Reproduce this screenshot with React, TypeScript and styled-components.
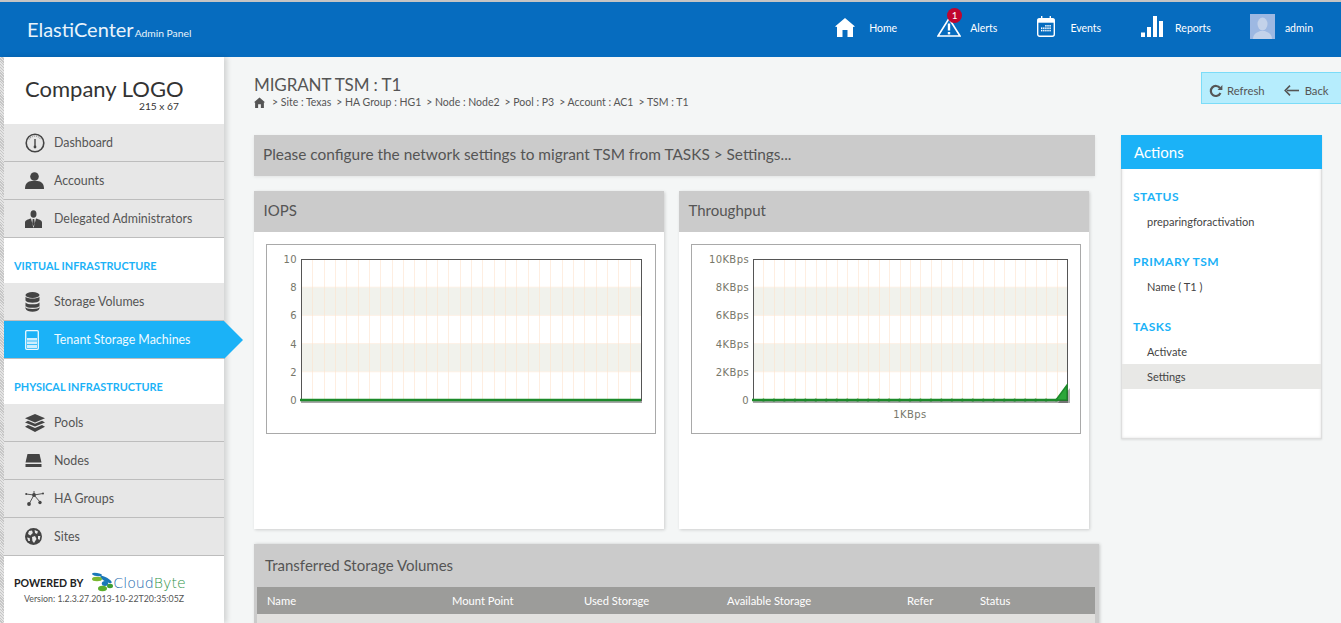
import React from 'react'
import styled, { createGlobalStyle } from 'styled-components'

const Global = createGlobalStyle`
  html, body {
    margin: 0;
    height: 623px;
    overflow: hidden;
    background: #f4f6f6;
    font-family: Lato, "Noto Sans", "Liberation Sans", sans-serif;
  }
  * { box-sizing: border-box; }
`

const BLUE = '#1bb2f7'

const Page = styled.div`
  width: 1341px;
  height: 623px;
  display: flex;
  flex-direction: column;
  overflow: hidden;
`

const TopBar = styled.header`
  height: 57px;
  flex: none;
  background: #066cbf;
  border-top: 2px solid #c4c4c4;
  display: flex;
  align-items: center;
  justify-content: space-between;
  padding: 0 28px 0 27px;
  color: #fff;
`

const Brand = styled.div`
  font-size: 20px;
  display: flex;
  align-items: baseline;
  gap: 1px;
  padding-bottom: 2px;
  color: #e8f3fb;
  small {
    font-size: 10.3px;
  }
`

const Nav = styled.nav`
  display: flex;
  align-items: center;
  gap: 40px;
  margin-bottom: 6px;
`

const NavItem = styled.div<{ $gap: number }>`
  position: relative;
  display: flex;
  align-items: center;
  gap: ${p => p.$gap}px;
  font-size: 10.5px;
`

const NavLabel = styled.span`
  padding-top: 3px;
`

const Badge = styled.span`
  position: absolute;
  left: 10px;
  top: -9px;
  width: 15px;
  height: 15px;
  border-radius: 50%;
  background: #c0052e;
  font-size: 10px;
  line-height: 15px;
  text-align: center;
`

const Avatar = styled.div`
  width: 25px;
  height: 25px;
  margin-left: -1px;
  background: #9db8e2;
  overflow: hidden;
`

const Body = styled.div`
  flex: 1;
  display: flex;
  min-height: 0;
`

const Sidebar = styled.aside`
  width: 224px;
  flex: none;
  background: #fff;
  border-left: 4px solid #d2d2d2;
  border-image: repeating-linear-gradient(45deg, #c6c6c6 0 1px, #e4e4e4 1px 2px) 4;
  box-shadow: 3px 0 5px rgba(0, 0, 0, 0.14);
  position: relative;
  z-index: 2;
`

const LogoBox = styled.div`
  height: 67px;
  padding: 18px 0 0 21px;
  color: #333;
  font-size: 22px;
  line-height: 27px;
  position: relative;
  small {
    position: absolute;
    left: 135px;
    top: 43px;
    font-size: 10.2px;
    line-height: 13px;
  }
`

const MenuItem = styled.div<{ $active?: boolean }>`
  height: 38px;
  display: flex;
  align-items: center;
  position: relative;
  padding-left: 21px;
  font-size: 12.4px;
  color: ${p => (p.$active ? '#eefaff' : '#555')};
  background: ${p => (p.$active ? BLUE : '#e7e7e7')};
  border-bottom: 1px solid #bdbdbd;
  ${p =>
    p.$active &&
    `&::after {
      content: '';
      position: absolute;
      left: 100%;
      top: 0;
      border-style: solid;
      border-width: 19px 0 19px 19px;
      border-color: transparent transparent transparent ${BLUE};
    }`}
`

const IconSlot = styled.span`
  width: 29px;
  display: flex;
  align-items: center;
  flex: none;
`

const SectionLabel = styled.div`
  height: 45px;
  padding: 21px 0 0 10px;
  font-size: 10.9px;
  line-height: 14px;
  font-weight: 700;
  color: ${BLUE};
`

const Powered = styled.div`
  padding: 17px 0 0 10px;
  color: #222;
  font-size: 10.6px;
  font-weight: 700;
`

const PoweredRow = styled.div`
  display: flex;
  align-items: center;
  gap: 8px;
  height: 20px;
`

const Version = styled.div`
  font-size: 8.8px;
  font-weight: 400;
  color: #555;
  padding-left: 10px;
  white-space: nowrap;
`

const Logotype = styled.span`
  display: flex;
  align-items: center;
  font-family: "DejaVu Sans", sans-serif;
  font-size: 14.2px;
  font-weight: 200;
  margin-top: -1px;
  color: #1769ad;
  b {
    font-weight: 200;
    color: #2f9447;
  }
`

const Main = styled.main`
  flex: 1;
  padding: 16px 0 0 30px;
  min-width: 0;
`

const TitleRow = styled.div`
  height: 62px;
  display: flex;
  justify-content: space-between;
`

const Title = styled.h1`
  margin: 0;
  font-size: 17px;
  line-height: 23px;
  font-weight: 400;
  letter-spacing: -0.1px;
  color: #555;
`

const Crumbs = styled.div`
  display: flex;
  align-items: center;
  gap: 5px;
  font-size: 10.5px;
  line-height: 13px;
  color: #555;
  svg {
    margin-right: 2px;
  }
`

const RefreshBar = styled.div`
  width: 140px;
  height: 32px;
  margin-top: -1px;
  display: flex;
  align-items: center;
  gap: 19px;
  padding: 5px 0 0 7px;
  background: #b6edfd;
  border: 1px solid #7bdcf8;
  border-right: none;
  font-size: 11.3px;
  color: #555;
`

const BarButton = styled.span<{ $gap: number }>`
  display: flex;
  align-items: center;
  gap: ${p => p.$gap}px;
`

const Columns = styled.div`
  display: flex;
  align-items: flex-start;
`

const LeftColumn = styled.div`
  width: 867px;
  flex: none;
`

const Notice = styled.div`
  width: 841px;
  height: 41px;
  background: #cbcbcb;
  color: #555;
  font-size: 15.4px;
  line-height: 39px;
  padding-left: 9px;
  box-shadow: 0 1px 3px rgba(0, 0, 0, 0.08);
`

const ChartRow = styled.div`
  display: flex;
  gap: 15px;
  margin-top: 15px;
`

const Card = styled.section`
  width: 410px;
  height: 338px;
  background: #fff;
  box-shadow: 1px 1px 3px rgba(0, 0, 0, 0.16);
`

const CardHead = styled.div`
  height: 41px;
  background: #cbcbcb;
  color: #555;
  font-size: 15px;
  line-height: 39px;
  padding-left: 9.5px;
`

const ChartFrame = styled.div`
  width: 390px;
  height: 190px;
  margin: 12px 0 0 12px;
  border: 1px solid #a9a9a9;
  svg {
    display: block;
  }
`

const TablePanel = styled.section`
  width: 845px;
  margin-top: 15px;
  padding: 0 4px 0 3px;
  background: #cbcbcb;
  box-shadow: 1px 0 3px rgba(0, 0, 0, 0.18);
`

const TableTitle = styled.div`
  height: 43px;
  line-height: 43px;
  padding-left: 8px;
  font-size: 15px;
  color: #555;
`

const TableHead = styled.div`
  height: 27px;
  display: grid;
  grid-template-columns: 185px 132px 143px 180px 73px 1fr;
  align-items: center;
  padding-left: 10px;
  background: #9c9c9a;
  color: #fff;
  font-size: 11.2px;
`

const TableRow = styled.div`
  height: 30px;
  background: #e2e1df;
`

const ActionsPanel = styled.aside`
  width: 201px;
  height: 304px;
  background: #fff;
  border: 1px solid #dedede;
  border-top: none;
  box-shadow: inset 0 0 3px rgba(0, 0, 0, 0.12), 0 1px 2px rgba(0, 0, 0, 0.1);
`

const ActionsHead = styled.div`
  height: 34px;
  margin: 0 -1px;
  background: ${BLUE};
  color: #fff;
  font-size: 15px;
  line-height: 34px;
  padding-left: 13px;
`

const ActionGroup = styled.div`
  padding-top: 21px;
`

const ActionLabel = styled.div`
  height: 14px;
  line-height: 14px;
  padding-left: 11px;
  font-size: 12px;
  font-weight: 700;
  letter-spacing: 0.5px;
  color: ${BLUE};
`

const ActionLink = styled.div<{ $on?: boolean }>`
  height: 25px;
  line-height: 25px;
  padding-left: 25px;
  font-size: 11px;
  color: #444;
  background: ${p => (p.$on ? '#e8e8e6' : 'transparent')};
`

const LinkStack = styled.div`
  padding-top: 5px;
`

const HomeIcon = ({ size = 20, color = '#fff' }: { size?: number; color?: string }) => (
  <svg width={size} height={size} viewBox="0 0 20 20">
    <path fill={color} d="M10 1 L20 9.5 L18 10 V20 H12.5 V13 H7.5 V20 H2 V10 L0 9.5 Z" />
  </svg>
)

const AlertIcon = () => (
  <svg width="24" height="20" viewBox="0 0 24 20">
    <path d="M12 1.5 L23 19 H1 Z" fill="none" stroke="#fff" strokeWidth="1.6" />
    <rect x="10.8" y="6.5" width="2.4" height="7" fill="#fff" />
    <rect x="10.8" y="15" width="2.4" height="2.4" fill="#fff" />
  </svg>
)

const CalendarIcon = () => (
  <svg width="18" height="21" viewBox="0 0 18 21">
    <rect x="0.7" y="2.7" width="16.6" height="17.6" rx="2" fill="none" stroke="#fff" strokeWidth="1.4" />
    <rect x="0.7" y="2.7" width="16.6" height="4" fill="#fff" />
    <rect x="4" y="0" width="1.4" height="4" fill="#fff" />
    <rect x="12.6" y="0" width="1.4" height="4" fill="#fff" />
    <g fill="#fff">
      {[0, 1, 2].map(r =>
        [0, 1, 2, 3, 4].map(c =>
          r === 0 && c < 2 ? null : <rect key={`${r}${c}`} x={4 + c * 2.1} y={9 + r * 2.4} width="1.4" height="1.6" />
        )
      )}
    </g>
  </svg>
)

const BarsIcon = () => (
  <svg width="22" height="21" viewBox="0 0 22 21">
    <rect x="0" y="16.5" width="4" height="4.5" fill="#fff" />
    <rect x="6" y="11" width="4" height="10" fill="#fff" />
    <rect x="12" y="0" width="4" height="21" fill="#fff" />
    <rect x="18" y="5" width="4" height="16" fill="#fff" />
  </svg>
)

const GaugeIcon = () => (
  <svg width="20" height="20" viewBox="0 0 20 20">
    <circle cx="10" cy="10" r="8.8" fill="none" stroke="#444" strokeWidth="1.6" />
    <path d="M4 6.5 A7 7 0 0 1 16 6.5" fill="none" stroke="#999" strokeWidth="1.2" strokeDasharray="1 1" />
    <path d="M10 6 V13" stroke="#444" strokeWidth="1.4" />
    <circle cx="10" cy="14" r="1.4" fill="#444" />
  </svg>
)

const PersonIcon = () => (
  <svg width="19" height="17" viewBox="0 0 19 17">
    <circle cx="9.5" cy="4.5" r="4.3" fill="#444" />
    <path fill="#444" d="M0 17 C0 11 3 9.5 6.5 9 H12.5 C16 9.5 19 11 19 17 Z" />
  </svg>
)

const SuitIcon = () => (
  <svg width="17" height="18" viewBox="0 0 17 18">
    <ellipse cx="8.5" cy="4" rx="3" ry="3.8" fill="#444" />
    <path fill="#444" d="M0 18 V12.5 C0 10 3 9.5 6 8.5 L8.5 18 L11 8.5 C14 9.5 17 10 17 12.5 V18 Z" />
    <path fill="#444" d="M7.7 9 H9.3 L9.8 14 L8.5 16 L7.2 14 Z" />
  </svg>
)

const DatabaseIcon = () => (
  <svg width="15" height="20" viewBox="0 0 15 20">
    <ellipse cx="7.5" cy="3" rx="7" ry="3" fill="#444" />
    <path fill="#444" d="M.5 4.8 C2 7.2 13 7.2 14.5 4.8 V8.5 C13 11.4 2 11.4 .5 8.5 Z" />
    <path fill="#444" d="M.5 10.4 C2 13 13 13 14.5 10.4 V16.5 C13 20.8 2 20.8 .5 16.5 Z" />
    <path d="M.5 14.4 C2 17 13 17 14.5 14.4" fill="none" stroke="#e7e7e7" strokeWidth="1.1" />
  </svg>
)

const MachineIcon = () => (
  <svg width="15" height="20" viewBox="0 0 15 20">
    <rect x="0.7" y="0.7" width="12.6" height="18.6" rx="1" fill="none" stroke="#eaf8ff" strokeWidth="1.3" />
    <rect x="2" y="8" width="10" height="2.6" fill="#cfeefd" />
    <rect x="2" y="11.4" width="10" height="2.6" fill="#cfeefd" />
    <rect x="2" y="14.8" width="10" height="3.2" fill="#cfeefd" />
  </svg>
)

const LayersIcon = () => (
  <svg width="20" height="18" viewBox="0 0 20 18">
    <path fill="#444" d="M10 0 L20 4.2 L10 8.4 L0 4.2 Z" />
    <path fill="#444" d="M3 6.8 L10 9.8 L17 6.8 L20 8.4 L10 12.6 L0 8.4 Z" />
    <path fill="#444" d="M3 11 L10 14 L17 11 L20 12.8 L10 18 L0 12.8 Z" />
  </svg>
)

const DriveIcon = () => (
  <svg width="17" height="13" viewBox="0 0 17 13">
    <path fill="#444" d="M2.5 0 H14.5 L16.5 8.5 H0.5 Z" />
    <rect x="0.5" y="10" width="16" height="3" fill="#444" />
  </svg>
)

const MeshIcon = () => (
  <svg width="19" height="15" viewBox="0 0 19 15">
    <g stroke="#555" strokeWidth="1">
      <path d="M9 4 L4 13 M9 4 L15 11 M9 4 L1 3 M9 4 L18 2.5 M9 4 V0" />
    </g>
    <g fill="#444">
      <circle cx="9" cy="4" r="1.9" />
      <circle cx="4" cy="13" r="1.9" />
      <circle cx="15" cy="11.5" r="1.7" />
      <circle cx="1.2" cy="3" r="1" />
      <circle cx="18" cy="2.5" r="1" />
    </g>
  </svg>
)

const GlobeIcon = () => (
  <svg width="17" height="17" viewBox="0 0 17 17">
    <circle cx="8.5" cy="8.5" r="8.5" fill="#444" />
    <g fill="#e7e7e7">
      <path d="M4 3 L7 2.4 L7.8 5 L5.4 7.6 L3 6 Z" />
      <path d="M9.6 2 L13 3.5 L12 6 L10 5 Z" />
      <path d="M7 9 L10 8 L11.5 11 L9 15 L7.4 13 Z" />
      <path d="M13 8 L15.4 8 L14.6 12 L13 11 Z" />
      <path d="M2 9.4 L4.6 10 L5 13 L3.4 13 Z" />
    </g>
  </svg>
)

const RefreshIcon = () => (
  <svg width="14" height="14" viewBox="0 0 14 14">
    <path d="M11.4 9 A5 5 0 1 1 11 4.2" fill="none" stroke="#555" strokeWidth="2.2" />
    <path d="M13.4 1 V6 H8.6 Z" fill="#555" />
  </svg>
)

const BackIcon = () => (
  <svg width="15" height="11" viewBox="0 0 15 11">
    <path d="M15 5.5 H3" stroke="#555" strokeWidth="1.6" />
    <path d="M6 .6 L1.2 5.5 L6 10.4" fill="none" stroke="#555" strokeWidth="1.6" />
  </svg>
)

const CloudByteMark = () => (
  <svg width="22" height="21" viewBox="0 0 22 21">
    <ellipse cx="6" cy="2.5" rx="5" ry="1.6" fill="#1a78b8" transform="rotate(8 6 2.5)" />
    <ellipse cx="15" cy="7.5" rx="6.5" ry="2" fill="#1a78b8" transform="rotate(30 15 7.5)" />
    <ellipse cx="6" cy="7" rx="5" ry="2.2" fill="#7cb82f" />
    <ellipse cx="14" cy="11.5" rx="3.2" ry="2.5" fill="#1a78b8" />
    <ellipse cx="19" cy="14" rx="3" ry="2.2" fill="#3f9e36" />
    <ellipse cx="11.5" cy="16.5" rx="4.5" ry="2.7" fill="#5cae2e" />
  </svg>
)

const PLOT_TOP = 14
const PLOT_BOTTOM = 155

type ChartProps = {
  left: number
  right: number
  ticks: string[]
  xLabel?: string
  spike?: boolean
}

// flot style chart, drawn by hand
const Chart = ({ left, right, ticks, xLabel, spike }: ChartProps) => {
  const step = (right - left) / 30
  const rowH = (PLOT_BOTTOM - PLOT_TOP) / 5
  const yAt = (i: number) => PLOT_BOTTOM - i * rowH
  const labelProps = {
    fontFamily: "'DejaVu Sans', sans-serif",
    fontSize: 10,
    letterSpacing: 0.4,
    fill: '#77776a',
  }
  return (
    <svg width="388" height="188" viewBox="0 0 388 188">
      {[1, 3].map(i => (
        <rect key={i} x={left} y={yAt(i + 1)} width={right - left} height={rowH} fill="#f1f2ec" />
      ))}
      {[1, 2, 3, 4].map(i => (
        <line key={i} x1={left} x2={right} y1={yAt(i)} y2={yAt(i)} stroke="#fdf1e6" strokeWidth="1" />
      ))}
      {Array.from({ length: 29 }, (_, i) => (
        <line
          key={i}
          x1={Math.round(left + (i + 1) * step) + 0.5}
          x2={Math.round(left + (i + 1) * step) + 0.5}
          y1={PLOT_TOP}
          y2={PLOT_BOTTOM}
          stroke="#fde3cd"
          strokeOpacity="0.6"
          strokeWidth="1"
        />
      ))}
      <rect x={left + 0.5} y={PLOT_TOP + 0.5} width={right - left} height={PLOT_BOTTOM - PLOT_TOP} fill="none" stroke="#555" strokeWidth="1" />
      {ticks.map((t, i) => (
        <text key={t} x={left - 4} y={yAt(i) + 4} textAnchor="end" {...labelProps}>
          {t}
        </text>
      ))}
      {xLabel && (
        <text x={(left + right) / 2} y={173} textAnchor="middle" {...labelProps}>
          {xLabel}
        </text>
      )}
      <line x1={left} x2={right + 1} y1={PLOT_BOTTOM + 2} y2={PLOT_BOTTOM + 2} stroke="#000" strokeOpacity="0.35" strokeWidth="2" />
      {spike ? (
        <>
          <path d={`M${right - 10} ${PLOT_BOTTOM + 2} L${right + 2} ${PLOT_BOTTOM - 13} V${PLOT_BOTTOM + 2} Z`} fill="#000" fillOpacity="0.3" transform="translate(1 1)" />
          <path d={`M${right - 11} ${PLOT_BOTTOM} L${right} ${PLOT_BOTTOM - 15} V${PLOT_BOTTOM} Z`} fill="#2ca73a" stroke="#1c8a2a" strokeWidth="1.5" />
          <line x1={left - 1} x2={right - 11} y1={PLOT_BOTTOM} y2={PLOT_BOTTOM} stroke="#1c8a2a" strokeWidth="2.5" />
          {Array.from({ length: 29 }, (_, i) => (
            <circle key={i} cx={left + (i + 1) * step} cy={PLOT_BOTTOM} r="1.5" fill="#1c8a2a" />
          ))}
        </>
      ) : (
        <line x1={left - 1} x2={right} y1={PLOT_BOTTOM} y2={PLOT_BOTTOM} stroke="#1c8a2a" strokeWidth="2.5" />
      )}
    </svg>
  )
}

const menuTop = [
  { label: 'Dashboard', icon: <GaugeIcon /> },
  { label: 'Accounts', icon: <PersonIcon /> },
  { label: 'Delegated Administrators', icon: <SuitIcon /> },
]

const menuPhysical = [
  { label: 'Pools', icon: <LayersIcon /> },
  { label: 'Nodes', icon: <DriveIcon /> },
  { label: 'HA Groups', icon: <MeshIcon /> },
  { label: 'Sites', icon: <GlobeIcon /> },
]

const crumbs = ['Site : Texas', 'HA Group : HG1', 'Node : Node2', 'Pool : P3', 'Account : AC1', 'TSM : T1']

const App = () => (
  <Page>
    <Global />
    <TopBar>
      <Brand>
        ElastiCenter<small>Admin Panel</small>
      </Brand>
      <Nav>
        <NavItem $gap={14}>
          <HomeIcon />
          <NavLabel>Home</NavLabel>
        </NavItem>
        <NavItem $gap={9}>
          <AlertIcon />
          <Badge>1</Badge>
          <NavLabel>Alerts</NavLabel>
        </NavItem>
        <NavItem $gap={15}>
          <CalendarIcon />
          <NavLabel>Events</NavLabel>
        </NavItem>
        <NavItem $gap={12}>
          <BarsIcon />
          <NavLabel>Reports</NavLabel>
        </NavItem>
        <NavItem $gap={10}>
          <Avatar>
            <svg width="25" height="25" viewBox="0 0 25 25">
              <ellipse cx="12.5" cy="10" rx="5" ry="6.5" fill="#c3d2ea" />
              <path d="M3 25 C3 19 8 18.5 10 17 H15 C17 18.5 22 19 22 25 Z" fill="#c3d2ea" />
            </svg>
          </Avatar>
          <NavLabel>admin</NavLabel>
        </NavItem>
      </Nav>
    </TopBar>
    <Body>
      <Sidebar>
        <LogoBox>
          Company LOGO
          <small>215 x 67</small>
        </LogoBox>
        {menuTop.map(m => (
          <MenuItem key={m.label}>
            <IconSlot>{m.icon}</IconSlot>
            {m.label}
          </MenuItem>
        ))}
        <SectionLabel>VIRTUAL INFRASTRUCTURE</SectionLabel>
        <MenuItem>
          <IconSlot>
            <DatabaseIcon />
          </IconSlot>
          Storage Volumes
        </MenuItem>
        <MenuItem $active>
          <IconSlot>
            <MachineIcon />
          </IconSlot>
          Tenant Storage Machines
        </MenuItem>
        <SectionLabel>PHYSICAL INFRASTRUCTURE</SectionLabel>
        {menuPhysical.map(m => (
          <MenuItem key={m.label}>
            <IconSlot>{m.icon}</IconSlot>
            {m.label}
          </MenuItem>
        ))}
        <Powered>
          <PoweredRow>
            POWERED BY
            <Logotype>
              <CloudByteMark />
              Cloud<b>Byte</b>
            </Logotype>
          </PoweredRow>
          <Version>Version: 1.2.3.27.2013-10-22T20:35:05Z</Version>
        </Powered>
      </Sidebar>
      <Main>
        <TitleRow>
          <div>
            <Title>MIGRANT TSM : T1</Title>
            <Crumbs>
              <HomeIcon size={11} color="#555" />
              {crumbs.map(c => (
                <span key={c}>&gt; {c}</span>
              ))}
            </Crumbs>
          </div>
          <RefreshBar>
            <BarButton $gap={4}>
              <RefreshIcon />
              Refresh
            </BarButton>
            <BarButton $gap={6}>
              <BackIcon />
              Back
            </BarButton>
          </RefreshBar>
        </TitleRow>
        <Columns>
          <LeftColumn>
            <Notice>Please configure the network settings to migrant TSM from TASKS &gt; Settings...</Notice>
            <ChartRow>
              <Card>
                <CardHead>IOPS</CardHead>
                <ChartFrame>
                  <Chart left={34} right={374} ticks={['0', '2', '4', '6', '8', '10']} />
                </ChartFrame>
              </Card>
              <Card>
                <CardHead>Throughput</CardHead>
                <ChartFrame>
                  <Chart
                    left={61}
                    right={375}
                    ticks={['0', '2KBps', '4KBps', '6KBps', '8KBps', '10KBps']}
                    xLabel="1KBps"
                    spike
                  />
                </ChartFrame>
              </Card>
            </ChartRow>
            <TablePanel>
              <TableTitle>Transferred Storage Volumes</TableTitle>
              <TableHead>
                <span>Name</span>
                <span>Mount Point</span>
                <span>Used Storage</span>
                <span>Available Storage</span>
                <span>Refer</span>
                <span>Status</span>
              </TableHead>
              <TableRow />
            </TablePanel>
          </LeftColumn>
          <ActionsPanel>
            <ActionsHead>Actions</ActionsHead>
            <ActionGroup>
              <ActionLabel>STATUS</ActionLabel>
              <LinkStack>
                <ActionLink>preparingforactivation</ActionLink>
              </LinkStack>
            </ActionGroup>
            <ActionGroup>
              <ActionLabel>PRIMARY TSM</ActionLabel>
              <LinkStack>
                <ActionLink>Name ( T1 )</ActionLink>
              </LinkStack>
            </ActionGroup>
            <ActionGroup>
              <ActionLabel>TASKS</ActionLabel>
              <LinkStack>
                <ActionLink>Activate</ActionLink>
                <ActionLink $on>Settings</ActionLink>
              </LinkStack>
            </ActionGroup>
          </ActionsPanel>
        </Columns>
      </Main>
    </Body>
  </Page>
)

export default App
